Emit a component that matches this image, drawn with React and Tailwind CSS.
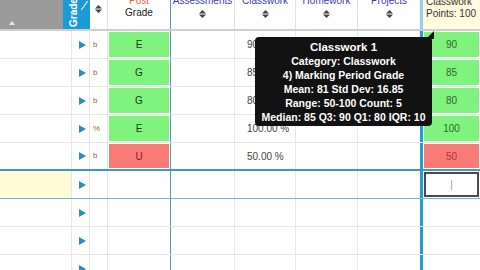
import React from "react";

const ROWS = [
  { frag: "b", grade: "E", cw: "90.00 %", pts: "90", good: true },
  { frag: "b", grade: "G", cw: "85.00 %", pts: "85", good: true },
  { frag: "b", grade: "G", cw: "80.00 %", pts: "80", good: true },
  { frag: "%", grade: "E", cw: "100.00 %", pts: "100", good: true },
  { frag: "b", grade: "U", cw: "50.00 %", pts: "50", good: false },
];

function Sort() {
  return (
    <svg width="7" height="8" viewBox="0 0 7 8" className="mx-auto">
      <path d="M3.5 0 L7 3.5 H0 Z M3.5 8 L0 4.5 H7 Z" fill="#444" />
    </svg>
  );
}

function Arrow() {
  return (
    <svg width="7" height="8" viewBox="0 0 7 8">
      <path d="M0 0 L7 4 L0 8 Z" fill="#2a8fb0" />
    </svg>
  );
}

function HeadCell({ w, title, border = "border-r border-[#e2e2e2]" }) {
  return (
    <div className={`${w} h-full ${border} flex flex-col justify-end items-center overflow-hidden pb-[11px]`}>
      <div className="text-[10px] leading-[12px] text-[#3b3bb0] whitespace-nowrap">{title}</div>
      <div className="mt-[3px]"><Sort /></div>
    </div>
  );
}

function Row({ r, selected, line }) {
  const cellBorder = "border-r border-[#e6e6e6]";
  const bottom =
    line === "dark" ? "border-b-2 border-[#3d9cb0]" : line === "light" ? "border-b border-[#6db8ca]" : "border-b border-[#e6e6e6]";
  return (
    <div className={`flex h-[28px] ${bottom}`}>
      <div className={`w-[72px] ${cellBorder} ${selected ? "bg-[#fffbd8]" : "bg-white"}`} />
      <div className={`w-[18px] ${cellBorder} flex items-center justify-center pl-[3px]`}><Arrow /></div>
      <div className={`w-[18px] ${cellBorder} flex items-center pl-[3px] text-[8px] text-[#a0603c]`}>{r ? r.frag : ""}</div>
      <div className="w-[63px] border-r border-[#5a9aa8] p-[1px]">
        {r && (
          <div className={`h-full flex items-center justify-center text-[10px] ${r.good ? "bg-[#80f27e] text-[#1b3a1b]" : "bg-[#f87b78] text-[#8a1c1c]"}`}>
            {r.grade}
          </div>
        )}
      </div>
      <div className={`w-[64px] ${cellBorder}`} />
      <div className={`w-[61px] ${cellBorder} flex items-center pl-[12px] text-[10px] text-[#444]`}>{r ? r.cw : ""}</div>
      <div className={`w-[62px] ${cellBorder}`} />
      <div className="w-[62px]" />
      <div className="w-[3px] bg-[#1fa0d0]" />
      <div className="w-[57px] p-[1px]">
        {r && (
          <div className={`h-full flex items-center justify-center text-[10px] ${r.good ? "bg-[#80f27e] text-[#2c6a2c]" : "bg-[#f87b78] text-[#b03636]"}`}>
            {r.pts}
          </div>
        )}
        {selected && (
          <div className="h-full border-2 border-[#4a4a4a] bg-white flex items-center justify-center text-[10px] text-[#999]">|</div>
        )}
      </div>
    </div>
  );
}

export default function App() {
  return (
    <div className="relative w-[480px] h-[270px] overflow-hidden bg-white" style={{ fontFamily: '"Liberation Sans", Arial, sans-serif' }}>
      {/* Header */}
      <div className="flex h-[31px] border-b-2 border-[#cfcfcf]">
        <div className="w-[63px] h-full bg-[#9a9a9a] relative">
          <svg width="6" height="4" viewBox="0 0 6 4" className="absolute left-[9px] top-[21px]">
            <path d="M3 0 L6 4 H0 Z" fill="#e8e8e8" />
          </svg>
        </div>
        <div className="w-[27px] h-full bg-[#1b9ad8] relative overflow-hidden">
          <div className="absolute left-[5px] bottom-[2px] origin-bottom-left -rotate-90 translate-x-[11px] text-[10px] font-bold text-white leading-[11px] whitespace-nowrap">
            Grade
          </div>
          <div className="absolute left-[21px] top-[0px] w-[1px] h-[11px] bg-white rotate-[35deg]" />
        </div>
        <div className="w-[18px] h-full border-r border-[#e2e2e2] pt-[5px]"><Sort /></div>
        <div className="w-[63px] h-full border-r border-[#5a9aa8] flex flex-col justify-end items-center overflow-hidden pb-[10px]">
          <div className="text-[10px] leading-[12px] text-[#e2603a]">Post</div>
          <div className="text-[10px] leading-[12px] text-[#222]">Grade</div>
        </div>
        <HeadCell w="w-[64px]" title="Assessments" />
        <HeadCell w="w-[61px]" title="Classwork" />
        <HeadCell w="w-[62px]" title="Homework" />
        <HeadCell w="w-[62px]" title="Projects" border="" />
        <div className="w-[3px] bg-[#8fd0ea]" />
        <div className="w-[57px] h-full bg-[#fffbdc] flex flex-col justify-end overflow-hidden pb-[9px] pl-[3px]">
          <div className="text-[10px] leading-[12px] text-[#333]">Classwork</div>
          <div className="text-[10px] leading-[12px] text-[#333]">Points: 100</div>
        </div>
      </div>

      {/* Body */}
      {ROWS.map((r, i) => (
        <Row key={i} r={r} line={i === 4 ? "dark" : undefined} />
      ))}
      <Row selected line="light" />
      <Row />
      <Row />
      <Row />

      {/* Tooltip */}
      <div className="absolute left-[255px] top-[37px] w-[177px] h-[89px] bg-[#121212] rounded-[4px] flex flex-col items-center justify-center text-white font-bold text-[10.5px] leading-[14px]">
        <div className="text-[11.5px]">Classwork 1</div>
        <div>Category: Classwork</div>
        <div>4) Marking Period Grade</div>
        <div>Mean: 81 Std Dev: 16.85</div>
        <div>Range: 50-100 Count: 5</div>
        <div className="whitespace-nowrap">Median: 85 Q3: 90 Q1: 80 IQR: 10</div>
        <svg width="8" height="8" viewBox="0 0 8 8" className="absolute -top-[6px] right-[-2px]">
          <path d="M0 8 L8 0 V8 Z" fill="#121212" />
        </svg>
      </div>
    </div>
  );
}
